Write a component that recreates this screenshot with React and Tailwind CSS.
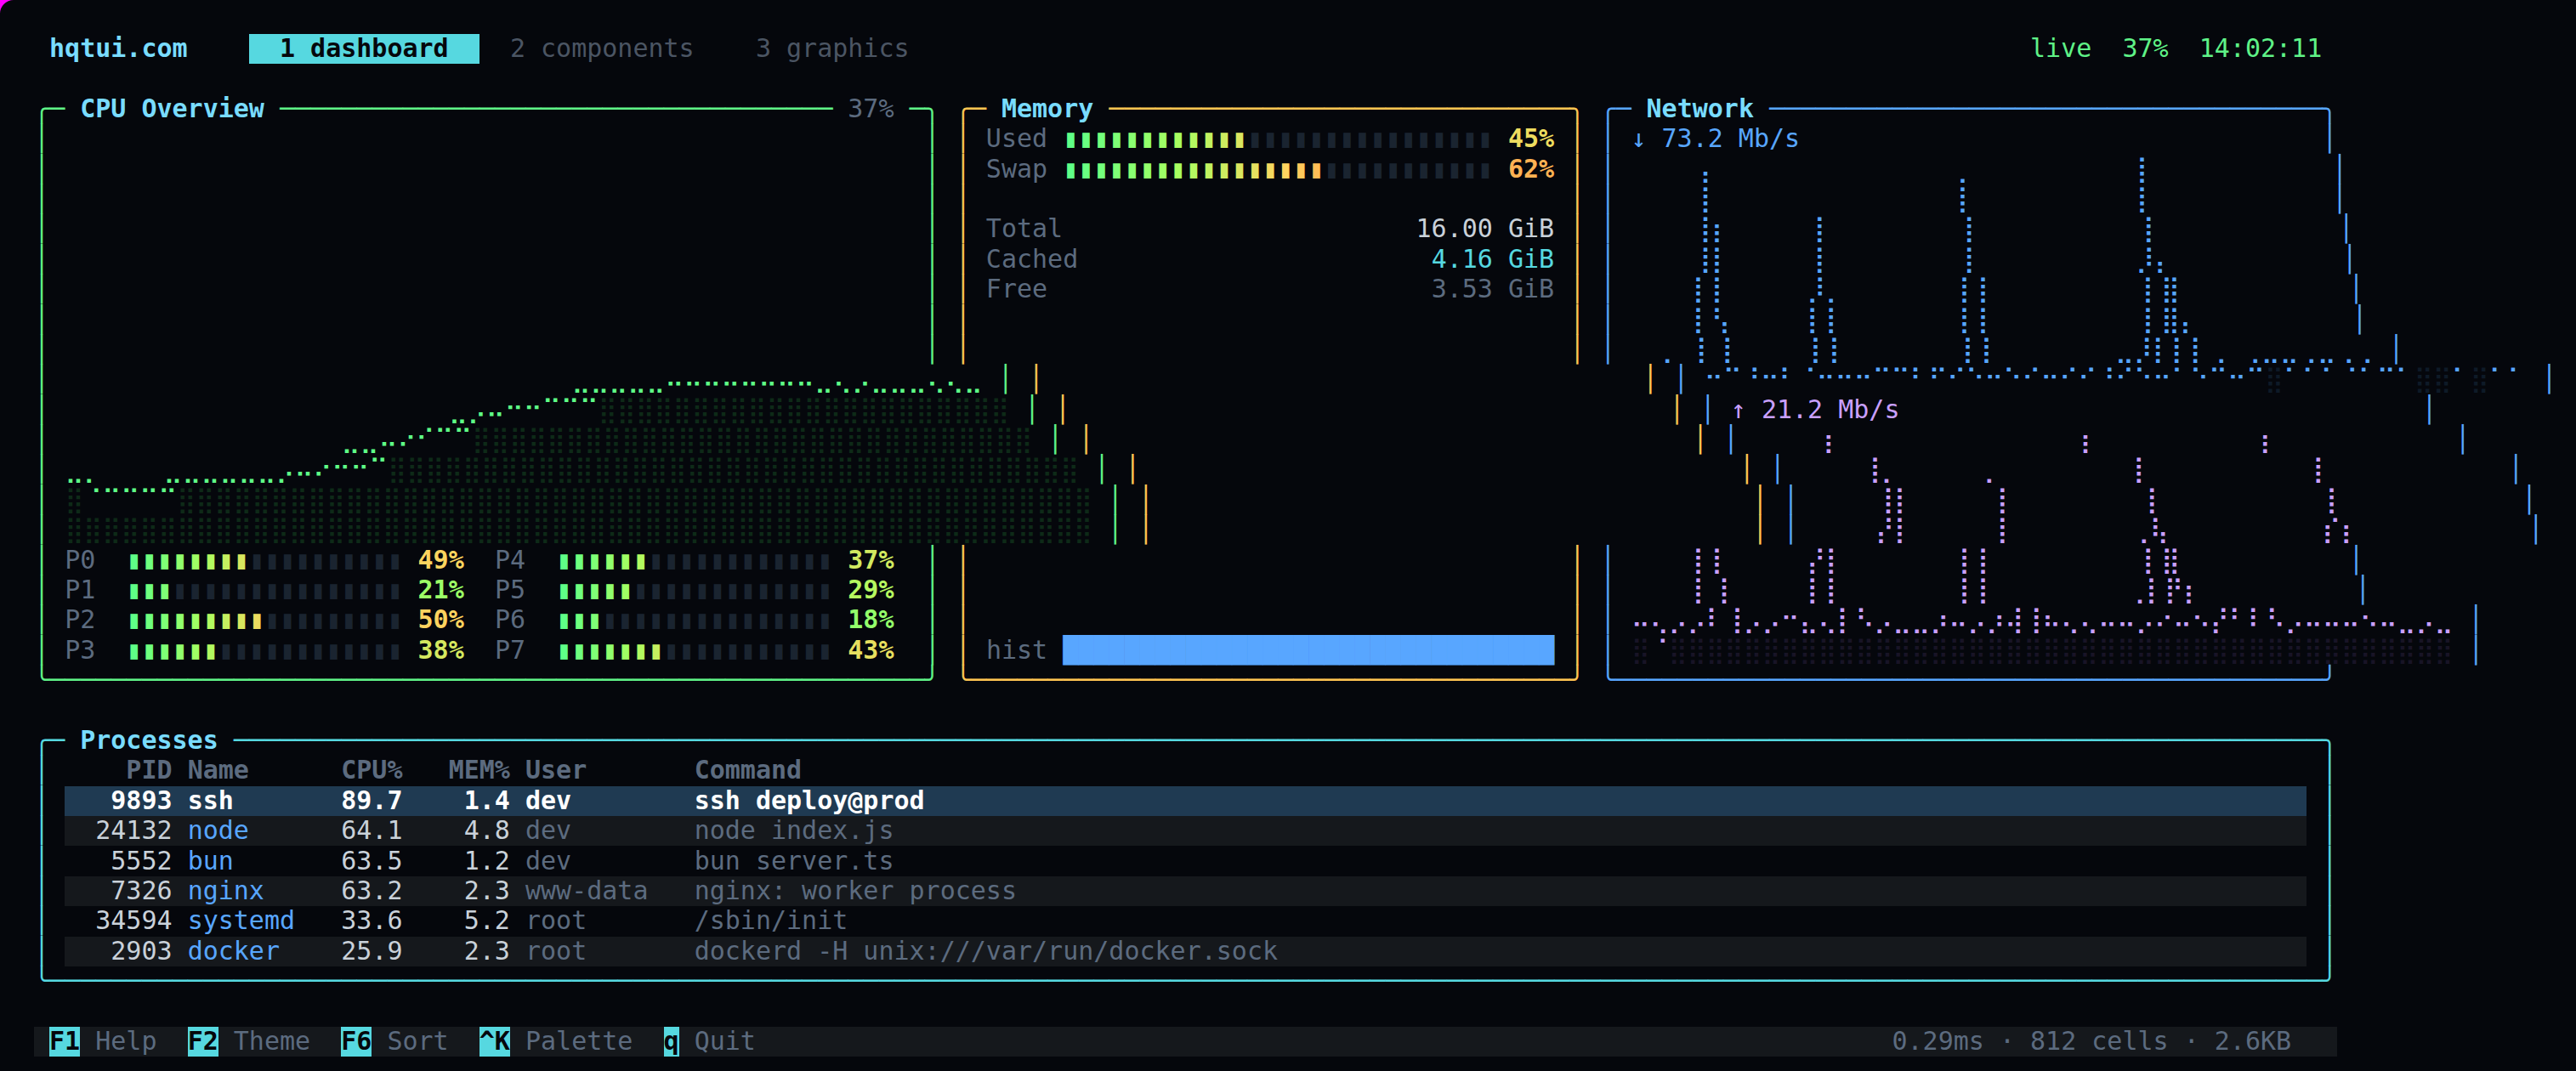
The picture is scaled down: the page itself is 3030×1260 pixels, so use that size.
import React from 'react';

const BRAILLE = { L: [1, 2, 4, 64], R: [8, 16, 32, 128] };
const FULL = '\u28FF';
const EMPTY = '\u2800';

const GREEN = 'text-[#5ff287]';
const AMBER = 'text-[#ffc552]';
const BLUE = 'text-[#58a6ff]';
const CYAN = 'text-[#56d8e0]';
const TITLE = 'font-bold text-[#79dcff]';
const GREY = 'text-[#5c6b7f]';
const TAB = 'text-[#4b5563]';
const WHITE = 'text-[#c9d1d9]';
const TRACK = 'text-[#1a2430]';
const LIVE = 'text-[#5ff287]';
const PURPLE = 'text-[#c9a0ff]';

const STOPS = [
  [0, [0x5f, 0xff, 0x87]],
  [0.25, [0xa8, 0xff, 0x60]],
  [0.5, [0xff, 0xd3, 0x5f]],
  [0.6, [0xff, 0xb6, 0x52]],
  [1, [0xff, 0x5f, 0x5f]],
];

function heat(t) {
  for (let i = 1; i < STOPS.length; i++) {
    if (t <= STOPS[i][0]) {
      const [a, ca] = STOPS[i - 1];
      const [b, cb] = STOPS[i];
      const k = (t - a) / (b - a);
      const m = ca.map((v, j) => Math.round(v + (cb[j] - v) * k));
      return `rgb(${m[0]},${m[1]},${m[2]})`;
    }
  }
  return 'rgb(255,95,95)';
}

function t(text, className) {
  return { text, className };
}

function pairs(start, end) {
  const out = [];
  for (let c = start; c <= end; c++) out.push(c + 'L', c + 'R');
  return out.join(' ');
}

// A chart row: dots given per dot row, as tokens such as "4L 5R".
function chartRow(rows, total, bright, dim, { dimCells = [], blank = ' ' } = {}) {
  const cells = {};
  rows.forEach((line, row) => {
    if (!line) return;
    line.split(' ').forEach((tok) => {
      const side = tok.slice(-1);
      const c = parseInt(tok, 10);
      cells[c] = (cells[c] || 0) | BRAILLE[side][row];
    });
  });
  const segs = [];
  const push = (ch, cls) => {
    const last = segs[segs.length - 1];
    if (last && last.className === cls) last.text += ch;
    else segs.push(t(ch, cls));
  };
  for (let c = 0; c < total; c++) {
    if (cells[c]) push(String.fromCharCode(0x2800 + cells[c]), bright);
    else if (dimCells.includes(c)) push(FULL, dim);
    else push(blank, bright);
  }
  return segs;
}

function range(a, b) {
  const out = [];
  for (let i = a; i <= b; i++) out.push(i);
  return out;
}

function cols(tokens, digits = '0123') {
  const rows = ['', '', '', ''];
  tokens.split(' ').forEach((item) => {
    const [tok, ds] = item.split(':');
    (ds || digits).split('').forEach((d) => {
      rows[+d] = (rows[+d] ? rows[+d] + ' ' : '') + tok;
    });
  });
  return rows;
}

const CPU_BRIGHT = 'text-[#5fff87]';
const CPU_DIM = 'text-[#0e2a18]';
const CPU_CHART = {
  11: chartRow(['', '', pairs(38, 45) + ' 47L 48R 52L 53L', pairs(33, 37) + ' 46L 46R 47R 48L ' + pairs(49, 51) + ' 52R 53R 54L 54R'], 55, CPU_BRIGHT, CPU_DIM),
  12: chartRow([pairs(30, 32), pairs(28, 29), '26R 27L 27R', '25L 25R 26L'], 55, CPU_BRIGHT, CPU_DIM, { dimCells: range(33, 54) }),
  13: chartRow(['22R 23L 23R 24L 24R', '21R 22L', '20L 20R 21L', '18L 18R 19L 19R'], 55, CPU_BRIGHT, CPU_DIM, { dimCells: range(25, 54) }),
  14: chartRow(['17L 17R', '14R 15L 15R 16L 16R', '12R 13L 13R 14L', '0L 0R 1L ' + pairs(6, 11) + ' 12L'], 55, CPU_BRIGHT, CPU_DIM, { dimCells: range(18, 54) }),
  15: chartRow(['1R ' + pairs(2, 5), '', '', ''], 55, CPU_BRIGHT, CPU_DIM, { dimCells: [0, ...range(6, 54)] }),
  16: chartRow(['', '', '', ''], 55, CPU_BRIGHT, CPU_DIM, { dimCells: range(0, 54) }),
};

const DL = 'text-[#58a6ff]';
const DL_DIM = 'text-[#0e1a27]';
const UL = 'text-[#c9a0ff]';
const UL_DIM = 'text-[#181426]';

const NET_CHART = {
  4: chartRow(cols('4R:23 21L:3 32R'), 44, DL, DL_DIM),
  5: chartRow(cols('4R 21L 32R'), 44, DL, DL_DIM),
  6: chartRow(cols('4R 5L:123 11R 21L 32R'), 44, DL, DL_DIM),
  7: chartRow(cols('4R 5L 11R 21L 32L:3 32R:012 33L:23'), 44, DL, DL_DIM),
  8: chartRow(cols('4L 5L 11R:012 11L:3 12L:3 20R 21R 32L 33L 33R'), 44, DL, DL_DIM),
  9: chartRow(cols('4L 5L:01 5R:23 11L 12L 20R 21R 32L 33L 33R 34L:23'), 44, DL, DL_DIM),
  10: chartRow(cols('2L:3 4L 5R 11L 12L 20R 21R 30L:3 30R:3 31L:3 31R:012 32L 33L 34L 35R:3 37R:3 38L:3 38R:3 39L:3 39R:3 40R:3 41L:3 41R:3 42R:3 43R:3'), 44, DL, DL_DIM),
  11: chartRow([
    '1L 1R 2R 4L 5R 9L 9R 10L 10R 11L 12L 12R 13R 14L 16L 17R 19R 20R 21R 22R 23L 25L 26L 27L 27R 29L 29R 31L 32L 33L 34R 35L 36L 36R 37L 40L 42L 43L',
    '0L 0R 2R 3L 3R 4L 6L 6R 7L 7R 8L 8R 11L 12L 13L 14R 15L 15R 16R 17L 18L 18R 19L 20L 21R 22L 23R 24L 24R 26R 28L 28R',
    '',
    '',
  ], 44, DL, DL_DIM, { dimCells: [30, 38, 39, 41], blank: EMPTY }),
  13: chartRow(cols('4R:123 21L:123 32R:123'), 44, UL, UL_DIM),
  14: chartRow(cols('4R 5L:3 11R:3 21L 32R'), 44, UL, UL_DIM),
  15: chartRow(cols('4R 5L 11R 21L 32R'), 44, UL, UL_DIM),
  16: chartRow(cols('4R:01 4L:23 5L 11R 20R:3 21L:012 21R:23 32R:0 32L:123 33L:123'), 44, UL, UL_DIM),
  17: chartRow(cols('4L 5L 11R:01 11L:23 12L 20R 21R 32L 33L 33R'), 44, UL, UL_DIM),
  18: chartRow(cols('4L 5R 11L 12L 20R 21R 31R:3 32L 33L 33R:01 34L:123'), 44, UL, UL_DIM),
  19: chartRow([
    '4L 5R 11L 12L 20R 21R 31R 32L 33L 34L',
    '4L 5R 8L 8R 11L 12L 16R 19R 20R 21R 22L 28R 30L 31R 32L 33L 34L 39L',
    '0L 0R 1L 2R 3R 4L 5R 6R 7R 9L 10L 11L 12R 13R 16R 17L 17R 18R 19R 20L 20R 21R 22L 22R 23L 24L 25L 25R 26L 26R 27R 28L 29L 29R 30R 31L 33L 34R 35R 36L 36R 37L 37R 38L 38R 39R 40L 40R 42R',
    '1R 2L 3L 5R 6L 7L 9L 9R 10R 11L 13L 14L 14R 15L 15R 16L 18L 19L 20R 21R 23R 24R 27L 31L 35L 41L 41R 42L 43L 43R',
  ], 44, UL, UL_DIM, { blank: EMPTY }),
  20: chartRow(['1R', '', '', ''], 44, UL, UL_DIM, { dimCells: [0, ...range(2, 43)], blank: EMPTY }),
};

function bar(n, pct) {
  const filled = Math.floor((n * pct) / 100);
  const segs = [];
  for (let i = 0; i < filled; i++) {
    segs.push({ text: '\u25AE', color: heat(i / n) });
  }
  if (n > filled) segs.push(t('\u25AE'.repeat(n - filled), TRACK));
  return segs;
}

function pctSeg(pct) {
  return { text: pct + '%', color: heat(pct / 100), className: 'font-bold' };
}

const CPUS = [
  [['P0', 49], ['P4', 37]],
  [['P1', 21], ['P5', 29]],
  [['P2', 50], ['P6', 18]],
  [['P3', 38], ['P7', 43]],
];

function cpu(r) {
  const v = t('\u2502', GREEN);
  if (r === 2) {
    return [t('\u256D\u2500', GREEN), t(' CPU Overview ', TITLE), t('\u2500'.repeat(36), GREEN), t(' 37% ', GREY), t('\u2500\u256E', GREEN)];
  }
  if (r === 21) return [t('\u2570' + '\u2500'.repeat(57) + '\u256F', GREEN)];
  if (CPU_CHART[r]) return [v, t(' '), ...CPU_CHART[r], t(' '), v];
  if (r >= 17 && r <= 20) {
    const [a, b] = CPUS[r - 17];
    return [
      v,
      t(' '),
      t(a[0] + '  ', GREY),
      ...bar(18, a[1]),
      t(' '),
      pctSeg(a[1]),
      t('  '),
      t(b[0] + '  ', GREY),
      ...bar(18, b[1]),
      t(' '),
      pctSeg(b[1]),
      t('  '),
      v,
    ];
  }
  return [v, t(' '.repeat(57)), v];
}

const MEM_VALUES = {
  6: ['Total', '16.00 GiB', WHITE],
  7: ['Cached', '4.16 GiB', CYAN],
  8: ['Free', '3.53 GiB', GREY],
};

function mem(r) {
  const v = t('\u2502', AMBER);
  if (r === 2) return [t('\u256D\u2500', AMBER), t(' Memory ', TITLE), t('\u2500'.repeat(30) + '\u256E', AMBER)];
  if (r === 21) return [t('\u2570' + '\u2500'.repeat(39) + '\u256F', AMBER)];
  if (r === 3 || r === 4) {
    const [label, pct] = r === 3 ? ['Used', 45] : ['Swap', 62];
    return [v, t(' '), t(label + ' ', GREY), ...bar(28, pct), t(' '), pctSeg(pct), t(' '), v];
  }
  if (MEM_VALUES[r]) {
    const [label, value, cls] = MEM_VALUES[r];
    return [v, t(' '), t(label.padEnd(37 - value.length), GREY), t(value, cls), t(' '), v];
  }
  if (r === 20) {
    return [v, t(' '), t('hist ', GREY), t('\u2588'.repeat(32), BLUE), t(' '), v];
  }
  return [v, t(' '.repeat(39)), v];
}

function net(r) {
  const v = t('\u2502', BLUE);
  if (r === 2) return [t('\u256D\u2500', BLUE), t(' Network ', TITLE), t('\u2500'.repeat(36) + '\u256E', BLUE)];
  if (r === 21) return [t('\u2570' + '\u2500'.repeat(46) + '\u256F', BLUE)];
  if (r === 3) return [v, t(' '), t('\u2193 73.2 Mb/s', BLUE), t(' '.repeat(34)), v];
  if (r === 12) return [v, t(' '), t('\u2191 21.2 Mb/s', PURPLE), t(' '.repeat(34)), v];
  if (NET_CHART[r]) return [v, t(' '), ...NET_CHART[r], t(' '), v];
  return [v, t(' '.repeat(46)), v];
}

const PROCS = [
  ['9893', 'ssh', '89.7', '1.4', 'dev', 'ssh deploy@prod'],
  ['24132', 'node', '64.1', '4.8', 'dev', 'node index.js'],
  ['5552', 'bun', '63.5', '1.2', 'dev', 'bun server.ts'],
  ['7326', 'nginx', '63.2', '2.3', 'www-data', 'nginx: worker process'],
  ['34594', 'systemd', '33.6', '5.2', 'root', '/sbin/init'],
  ['2903', 'docker', '25.9', '2.3', 'root', 'dockerd -H unix:///var/run/docker.sock'],
];

function Seg({ seg }) {
  return (
    <span className={seg.className} style={seg.color ? { color: seg.color } : undefined}>
      {seg.text}
    </span>
  );
}

function Row({ segs, children }) {
  return (
    <div className="h-[35.4px] whitespace-pre">
      {segs && segs.map((seg, i) => <Seg key={i} seg={seg} />)}
      {children}
    </div>
  );
}

function ProcRow({ cells, rowClass, pidClass, nameClass, numClass, mutedClass }) {
  const [pid, name, c, m, user, cmd] = cells;
  return (
    <Row>
      <span className={`align-[1px] ${CYAN}`}>{'\u2502'}</span>
      {' '}
      <span className={rowClass}>
        <span className={`align-[1px] ${pidClass}`}>{pid.padStart(7)}</span>
        {' '}
        <span className={`align-[1px] ${nameClass}`}>{name.padEnd(9)}</span>
        {' '}
        <span className={`align-[1px] ${numClass}`}>{c.padEnd(4)}</span>
        <span className={`align-[1px] ${numClass}`}>{m.padStart(7)}</span>
        {' '}
        <span className={`align-[1px] ${mutedClass}`}>{user.padEnd(10)}</span>
        {' '}
        <span className={`align-[1px] ${mutedClass}`}>{cmd.padEnd(105)}</span>
      </span>
      {' '}
      <span className={`align-[1px] ${CYAN}`}>{'\u2502'}</span>
    </Row>
  );
}

function Key({ k, label, gap }) {
  return (
    <>
      <span className="bg-[#56d8e0] font-bold text-[#05070c]">
        <span className="align-[1px]">{k}</span>
      </span>
      <span className={`align-[1px] ${GREY}`}>{' ' + label + gap}</span>
    </>
  );
}

export default function App() {
  const panelRows = range(2, 21);
  return (
    <div className="h-[1260px] w-[3030px] overflow-hidden bg-[#ff00ff]">
      <div className="h-full rounded-tl-2xl bg-[#05070c] pt-[39px] pl-10 font-['DejaVu_Sans_Mono','DejaVu_Sans',monospace] text-[30px] leading-[35.4px] text-[#c9d1d9]">
        <Row>
          {' '}
          <span className="align-[1px] font-bold text-[#79dcff]">hqtui.com</span>
          {'    '}
          <span className="bg-[#56d8e0] font-bold text-[#05070c]">
            <span className="align-[1px]">{'  1 dashboard  '}</span>
          </span>
          <span className={`align-[1px] ${TAB}`}>{'  2 components    3 graphics  '}</span>
          {' '.repeat(71)}
          <span className={`align-[1px] ${LIVE}`}>{'live  37%  14:02:11'}</span>
        </Row>
        <Row />
        {panelRows.map((r) => (
          <Row key={r} segs={[...cpu(r), t(' '), ...mem(r), t(' '), ...net(r)]} />
        ))}
        <Row />
        <Row>
          <span className={CYAN}>{'\u256D\u2500'}</span>
          <span className={TITLE}>{' Processes '}</span>
          <span className={CYAN}>{'\u2500'.repeat(136) + '\u256E'}</span>
        </Row>
        <ProcRow
          cells={['PID', 'Name', 'CPU%', 'MEM%', 'User', 'Command']}
          rowClass="font-bold text-[#5c6b7f]"
        />
        {PROCS.map((p, i) => (
          <ProcRow
            key={p[0]}
            cells={p}
            rowClass={i === 0 ? 'bg-[#1f3a52] font-bold text-white' : i % 2 === 1 ? 'bg-[#15181c]' : ''}
            pidClass={i === 0 ? '' : WHITE}
            nameClass={i === 0 ? '' : BLUE}
            numClass={i === 0 ? '' : WHITE}
            mutedClass={i === 0 ? '' : GREY}
          />
        ))}
        <Row>
          <span className={CYAN}>{'\u2570' + '\u2500'.repeat(148) + '\u256F'}</span>
        </Row>
        <Row />
        <Row>
          <span className="bg-[#15181c]">
            {' '}
            <Key k="F1" label="Help" gap="  " />
            <Key k="F2" label="Theme" gap="  " />
            <Key k="F6" label="Sort" gap="  " />
            <Key k="^K" label="Palette" gap="  " />
            <Key k="q" label="Quit" gap="" />
            {' '.repeat(74)}
            <span className={`align-[1px] ${GREY}`}>{'0.29ms \u00B7 812 cells \u00B7 2.6KB'}</span>
            {'   '}
          </span>
        </Row>
      </div>
    </div>
  );
}
